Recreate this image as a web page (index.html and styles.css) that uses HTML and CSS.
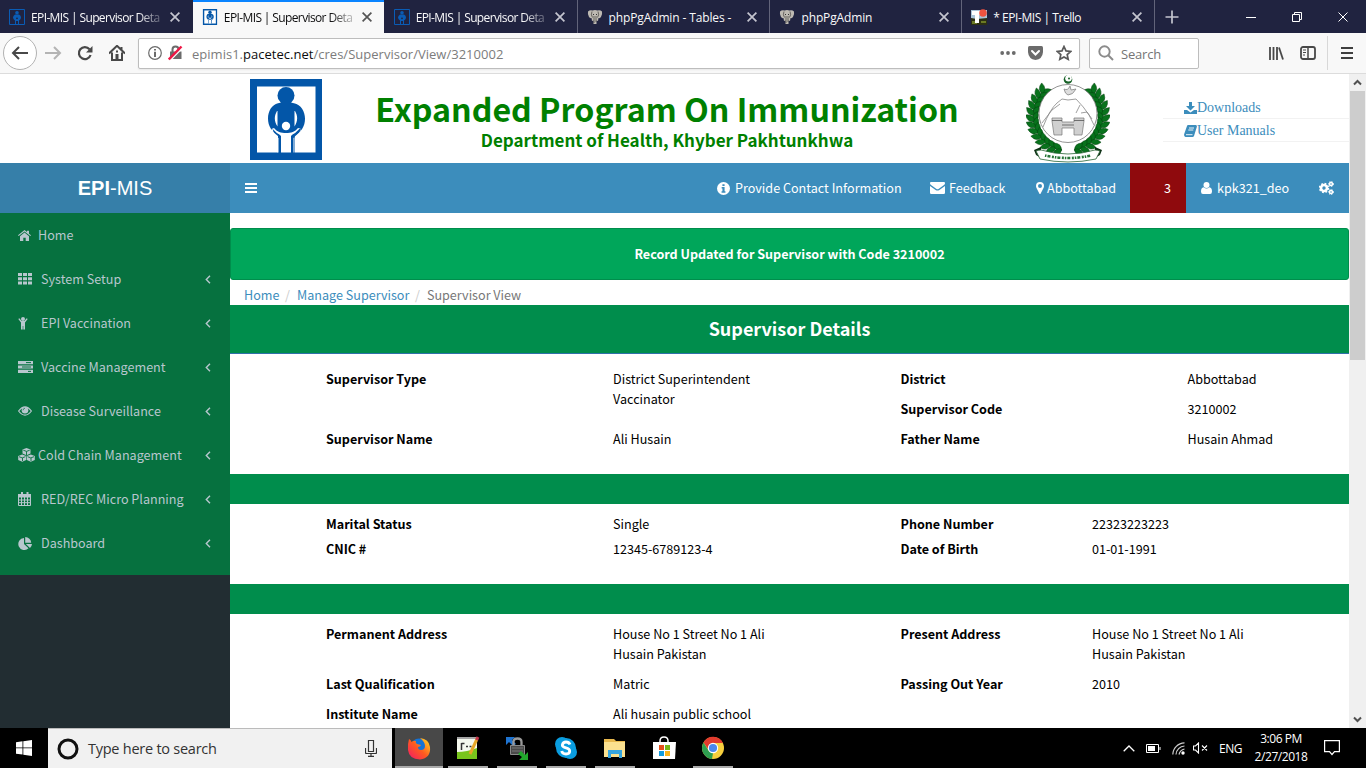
FILE: index.html
```html
<!DOCTYPE html>
<html lang="en">
<head>
<meta charset="utf-8">
<title>EPI-MIS | Supervisor Details</title>
<link rel="stylesheet" href="styles.css">
</head>
<body>
<svg class="defs" width="0" height="0">
  <defs>
    <symbol id="epi" viewBox="0 0 72 81">
      <rect width="72" height="81" fill="#0356a8"/><rect x="7" y="7.500" width="58.500" height="66" fill="#fff"/>
      <circle cx="36" cy="16.500" r="8.500" fill="#0356a8"/>
      <path fill="#0356a8" d="M31 23h10q0 1 3 1.200c7 1.500 11 8 11 15.500 0 8-4 13-10 17.500V74H28V57c-6-4.500-10-9.500-10-17.500 0-7.500 4-14 10-15.300q3-.2 3-1.200z"/>
      <path fill="#fff" d="M27 32c-3 5-3 10 .5 15.500V32zM45 32c3 5 3 10-.5 15.500V32zM22 49c5 6 6 5 9 8v16.500h10V57c3-3 4-2 9-8l1 2c-2 5-6 7-7.500 8v14.500h1V58c3-2 5-4 6.500-8l-3-1c-3 4-7 5-12 5s-9-1-12-5l-2.500 1c1 4 3 6 6 8v15.500h1V59c-2-1-5-3-5.500-8z"/>
      <circle cx="36" cy="47" r="4.200" fill="#fff"/>
    </symbol>
    <symbol id="epi-dark" viewBox="0 0 16 16">
      <path fill="none" stroke="#0a5cb5" stroke-width="1" d="M.5.500h15v15H.5z"/>
      <circle cx="8" cy="3.800" r="1.800" fill="#0a5cb5"/><path fill="#0a5cb5" d="M6 5.500h4q2 1 2 3T10 11.500V15H9v-3H7v3H6v-3.500Q4 10 4 8.500t2-3z"/><circle cx="8" cy="9.300" r=".9" fill="#202340"/>
    </symbol>
    <symbol id="x" viewBox="0 0 10 10"><path d="M.6.600l8.800 8.800M9.400.600L.6 9.400" fill="none" stroke="currentColor" stroke-width="1.700"/></symbol>
    <symbol id="elephant" viewBox="0 0 16 16">
      <path fill="#bdb9b2" d="M1 2.500Q3 .5 5.500 1.500 8 .5 10.500 1.500 13 .5 15 2.500q.6 3-1 5.500-1 1.500-2.500 1L11 12l-1.500-.5L9.500 15h-3V11.500L5 12 4.500 9Q3 9.500 2 8 .4 5.500 1 2.500z"/>
      <path fill="none" stroke="#4e4b48" stroke-width=".8" d="M5 2.500Q3.500 6 5.500 8.500M11 2.500q1.500 3.500-.5 6M7 7v7M9 7v6"/><path fill="#333" d="M6 5h1v1H6zM9 5h1v1H9z"/>
    </symbol>
    <symbol id="chev" viewBox="0 0 6 9"><path d="M5 .8L1.300 4.500 5 8.200" fill="none" stroke="currentColor" stroke-width="1.400"/></symbol>
  </defs>
</svg>

<div class="tabs">
  <div class="tab t1"><svg class="fav"><use href="#epi-dark"/></svg><span class="tt fade">EPI-MIS | Supervisor Deta</span><svg class="tx"><use href="#x"/></svg></div>
  <div class="tab t2 active"><svg class="fav"><use href="#epi"/></svg><span class="tt fade">EPI-MIS | Supervisor Deta</span><svg class="tx"><use href="#x"/></svg></div>
  <div class="tab t3"><svg class="fav"><use href="#epi-dark"/></svg><span class="tt fade">EPI-MIS | Supervisor Deta</span><svg class="tx"><use href="#x"/></svg></div>
  <div class="tab t4"><svg class="fav"><use href="#elephant"/></svg><span class="tt">phpPgAdmin - Tables -</span><svg class="tx"><use href="#x"/></svg></div>
  <div class="tab t5"><svg class="fav"><use href="#elephant"/></svg><span class="tt">phpPgAdmin</span><svg class="tx"><use href="#x"/></svg></div>
  <div class="tab t6"><svg class="fav" viewBox="0 0 16 16"><path fill="#a9c4d8" d="M0 1h16v14H0z"/><path fill="#2c2f14" d="M0 9l6 1 10-1v7H0z"/><path fill="#6b7a25" d="M1 12h5v3H1zM10 12h5v2h-5z"/><path fill="#fff" d="M1 2h9v4H8v8H4V6H1z"/><circle cx="12" cy="4" r="3.800" fill="#ee5340"/></svg><span class="tt">* EPI-MIS | Trello</span><svg class="tx"><use href="#x"/></svg></div>
  <div class="plus"><svg width="14" height="14" viewBox="0 0 14 14"><path d="M7 .5v13M.5 7h13" stroke="#c4c5cf" stroke-width="1.700"/></svg></div>
  <div class="win"><svg width="10" height="10"><path d="M0 5.500h10" stroke="#fff"/></svg></div>
  <div class="win"><svg width="10" height="10"><path d="M.5 2.500h7v7h-7zM2.500 2.500v-2h7v7h-2" fill="none" stroke="#fff"/></svg></div>
  <div class="win"><svg width="10" height="10"><path d="M.5.500l9 9M9.500.500l-9 9" stroke="#fff"/></svg></div>
</div>

<div class="toolbar">
  <div class="back"><svg width="18" height="14" viewBox="0 0 18 14"><path d="M8 1L2 7l6 6M2 7h15" fill="none" stroke="#484848" stroke-width="2"/></svg></div>
  <div class="tool fwd"><svg width="17" height="14" viewBox="0 0 17 14"><path d="M9 1l6 6-6 6M15 7H0" fill="none" stroke="#b4b4b4" stroke-width="2"/></svg></div>
  <div class="tool"><svg width="16" height="16" viewBox="0 0 16 16"><path d="M12.500 4.200A6 6 0 1 0 13.600 10" fill="none" stroke="#484848" stroke-width="2.200"/><path fill="#484848" d="M15.500 1v6.500H9z"/></svg></div>
  <div class="tool"><svg width="16" height="16" viewBox="0 0 16 16"><path d="M0 8.500L8 .8l8 7.700M3 7.500V15h10V7.500M12.500 2v3" fill="none" stroke="#484848" stroke-width="2"/><path fill="#484848" d="M6.500 9h3v6h-3zM7 5.500h2v2H7z"/></svg></div>
  <div class="urlbar">
    <svg width="14" height="14" viewBox="0 0 14 14"><circle cx="7" cy="7" r="6.300" fill="none" stroke="#6b6b6b" stroke-width="1.200"/><path fill="#6b6b6b" d="M6 3h2v1.600H6zM6 5.800h2V11H6z"/></svg>
    <svg class="lock" width="15" height="16" viewBox="0 0 15 16"><path fill="#6b6b6b" d="M2 6.500h11.500V14H2z"/><path d="M4.500 8V4.500a3 3 0 0 1 6 0V8" fill="none" stroke="#6b6b6b" stroke-width="2"/><path d="M2 15.500L14.500 3" stroke="#fff" stroke-width="1.500"/><path d="M.8 14.500L13.500 1.500" stroke="#ef1745" stroke-width="2.400"/></svg>
    <span class="url">epimis1.<b>pacetec.net</b>/cres/Supervisor/View/3210002</span>
    <svg width="16" height="4"><circle cx="2.200" cy="2" r="1.900" fill="#6b6b6b"/><circle cx="8" cy="2" r="1.900" fill="#6b6b6b"/><circle cx="13.800" cy="2" r="1.900" fill="#6b6b6b"/></svg>
    <svg class="pocket" width="15" height="14" viewBox="0 0 15 14"><path fill="#6b6b6b" d="M1.500 0h12Q15 0 15 1.500V6Q14.500 13 7.500 14 .5 13 0 6V1.500Q0 0 1.500 0z"/><path d="M4 5l3.500 3.500L11 5" fill="none" stroke="#fff" stroke-width="2" stroke-linecap="round"/></svg>
    <svg class="star" width="16" height="16" viewBox="0 0 16 16"><path d="M8 1.500l2 4.400 4.800.5-3.600 3.200 1 4.700L8 11.900l-4.200 2.400 1-4.700L1.200 6.400 6 5.900z" fill="none" stroke="#5a5a5a" stroke-width="1.700"/></svg>
  </div>
  <div class="search"><svg width="16" height="16" viewBox="0 0 16 16"><circle cx="6.500" cy="6.500" r="5.200" fill="none" stroke="#8b8b8b" stroke-width="1.900"/><path d="M10 10l5 5" stroke="#8b8b8b" stroke-width="2"/></svg><span>Search</span></div>
  <div class="tool lib"><svg width="16" height="14" viewBox="0 0 16 14"><path d="M2 1v13M5.500 1v13M9 1v13" stroke="#484848" stroke-width="1.800"/><path d="M11 1.500l4 12" stroke="#484848" stroke-width="1.800"/></svg></div>
  <div class="tool"><svg width="16" height="14" viewBox="0 0 16 14"><rect x="1" y="1" width="14" height="12" rx="2" fill="none" stroke="#484848" stroke-width="1.800"/><path d="M8 1v12" stroke="#484848" stroke-width="1.500"/><path d="M3 4h3M3 6.500h3M3 9h2" stroke="#484848"/></svg></div>
  <div class="menu"><svg width="12" height="12"><path d="M0 1h12M0 6h12M0 11h12" stroke="#3f3f3f" stroke-width="2"/></svg></div>
</div>

<div class="view">
  <div class="page">
    <header class="banner">
      <svg class="logo"><use href="#epi"/></svg>
      <div class="titles"><h1>Expanded Program On Immunization</h1><h2>Department of Health, Khyber Pakhtunkhwa</h2></div>
      <svg class="emblem" width="84" height="88" viewBox="0 0 84 88">
        <defs>
          <path id="leaf" d="M0 1Q-5.500-4 0-10 5.500-4 0 1z"/>
          <g id="pair"><use href="#leaf" transform="rotate(-38)"/><use href="#leaf" transform="rotate(38)"/></g>
          <g id="branch" fill="#08721c" stroke="#04430e" stroke-width=".5">
            <use href="#pair" transform="rotate(48) translate(0 -34.500) rotate(-82)"/>
            <use href="#pair" transform="rotate(58) translate(0 -34.500) rotate(-82)"/>
            <use href="#pair" transform="rotate(68) translate(0 -34.500) rotate(-82)"/>
            <use href="#pair" transform="rotate(78) translate(0 -34.500) rotate(-82)"/>
            <use href="#pair" transform="rotate(88) translate(0 -34.500) rotate(-82)"/>
            <use href="#pair" transform="rotate(98) translate(0 -34.500) rotate(-82)"/>
            <use href="#pair" transform="rotate(108) translate(0 -34.500) rotate(-82)"/>
            <use href="#pair" transform="rotate(118) translate(0 -34.500) rotate(-82)"/>
            <use href="#pair" transform="rotate(128) translate(0 -34.500) rotate(-82)"/>
            <use href="#pair" transform="rotate(138) translate(0 -34.500) rotate(-82)"/>
            <use href="#pair" transform="rotate(148) translate(0 -34.500) rotate(-82)"/>
            <use href="#pair" transform="rotate(158) translate(0 -34.500) rotate(-82)"/>
            <use href="#pair" transform="rotate(168) translate(0 -34.500) rotate(-82)"/>
          </g>
        </defs>
        <g transform="translate(42 41)"><use href="#branch"/><use href="#branch" transform="scale(-1 1)"/></g>
        <circle cx="42" cy="38.500" r="29" fill="#fff" stroke="#777" stroke-width=".8"/>
        <circle cx="42" cy="4.500" r="4.300" fill="#176127"/><circle cx="42.500" cy="3.200" r="3.300" fill="#fff"/><circle cx="43" cy="3.500" r="1" fill="#176127"/>
        <g fill="none" stroke="#858585" stroke-width=".8"><path d="M17 52Q24 34 31 28l5-4 6 1 8-1q8 8 13 16l5 10M16 48l10-13 8-6M54 30l-4 8M55 38l6-1 5 7"/><path fill="#ddd" d="M38 14q4 2 6-3l1 4 5-1q-3 6-8 6-3-1-4-6z"/></g>
        <path fill="#d0d0d0" stroke="#777" stroke-width=".7" d="M26 43h10v4h12v-4h10v3l-2 14h-8v-7H36v7h-8l-2-14z"/><path d="M26 45.500h10M48 45.500h10M36 50h12" stroke="#555" stroke-width=".8"/>
        <path fill="#0d2e14" d="M8 75l7-3v11l-5-3zM76 75l-7-3v11l5-3z"/>
        <path fill="#fff" stroke="#286535" stroke-width=".8" d="M10 76q3-1 5-1 27 8 54 0 2 0 5 1l-4 8q-28 6-56 0z"/>
        <path d="M19 80.500q23 5 46 0" fill="none" stroke="#277637" stroke-width="2.600" stroke-dasharray="1.500 1 3 1.500 2 1"/>
      </svg>
      <div class="links">
        <a><svg width="13" height="12" viewBox="0 0 13 12"><path fill="#3c8dbc" d="M5 0h3v4h3L6.500 8.500 2 4h3zM0 8h3l3.500 2.500L10 8h3v4H0z"/></svg>Downloads</a>
        <a><svg width="13" height="12" viewBox="0 0 13 12"><path fill="#3c8dbc" d="M4 0h8q1.200.5.800 2L10 11q-.5 1-1.500 1H1.500Q-.4 11 .2 9L3 1Q3.300 0 4 0zM2 9.500q0 1 1 1h5.500l2.600-8.700h.5L9 11H2.500Q1.500 11 1.500 9.500z"/><path d="M5 3h5M4.300 5h5M2 9.700h6.500" stroke="#fff" stroke-width=".9"/></svg>User Manuals</a>
      </div>
    </header>
    <div class="nav">
      <div class="brand"><b>EPI</b>-MIS</div>
      <div class="burger"><svg width="12" height="10"><path d="M0 1h12M0 5h12M0 9h12" stroke="#fff" stroke-width="2"/></svg></div>
      <div class="ni n1"><svg width="13" height="13" viewBox="0 0 12 12"><circle cx="6" cy="6" r="6" fill="#fff"/><path fill="#3c8dbc" d="M5 2h2v1.700H5zM4.300 4.600H7v4h.8V10H4.200V8.600H5V6h-.7z"/></svg><span>Provide Contact Information</span></div>
      <div class="ni n2"><svg width="15" height="12" viewBox="0 0 15 12"><path fill="#fff" d="M1 0h13q1 0 1 1.300Q15 2.300 14 3L8.500 7q-1 .6-2 0L1 3Q0 2.300 0 1.300 0 0 1 0zM0 4l6 4.200q1.500.8 3 0L15 4v6.700q0 1.300-1.300 1.300H1.300Q0 12 0 10.700z"/></svg><span>Feedback</span></div>
      <div class="ni n3"><svg width="8" height="12" viewBox="0 0 8 12"><path fill="#fff" fill-rule="evenodd" d="M4 0a4 4 0 0 1 4 4q0 1-.5 2L4.700 11.500q-.7 1-1.400 0L.5 6Q0 5 0 4a4 4 0 0 1 4-4zm0 2a2 2 0 1 0 0 4 2 2 0 0 0 0-4z"/></svg><span>Abbottabad</span></div>
      <div class="ni n4"><span>3</span></div>
      <div class="ni n5"><svg width="11" height="12" viewBox="0 0 11 12"><circle cx="5.500" cy="3" r="3" fill="#fff"/><path fill="#fff" d="M2.600 5.200q3 2.400 5.800 0Q11 5.500 11 9.500q0 2.500-2 2.500H2Q0 12 0 9.500 0 5.500 2.600 5.200z"/></svg><span>kpk321_deo</span></div>
      <div class="ni n6"><svg width="15" height="14" viewBox="0 0 15 14"><circle cx="5" cy="7" r="3" fill="none" stroke="#fff" stroke-width="2.600"/><circle cx="5" cy="7" r="4.500" fill="none" stroke="#fff" stroke-width="1.400" stroke-dasharray="1.770"/><circle cx="12" cy="3" r="1.500" fill="none" stroke="#fff" stroke-width="1.500"/><circle cx="12" cy="3" r="2.500" fill="none" stroke="#fff" stroke-dasharray="1.200"/><circle cx="12" cy="11" r="1.500" fill="none" stroke="#fff" stroke-width="1.500"/><circle cx="12" cy="11" r="2.500" fill="none" stroke="#fff" stroke-dasharray="1.200"/></svg></div>
    </div>
    <div class="body">
      <aside class="side"><div class="smenu">
        <div class="si tight"><svg width="13" height="11" viewBox="0 0 13 11"><path fill="currentColor" d="M6.500 2.500L11 6.300V11H7.700V7.700H5.300V11H2V6.300zM6.500 0L9 2V.7h2v3L13 5.300l-.7.8L6.500 1.500.7 6.100 0 5.300z"/></svg><span>Home</span></div>
        <div class="si"><svg width="14" height="12" viewBox="0 0 14 12"><path fill="currentColor" d="M0 0h4v3H0zM5 0h4v3H5zM10 0h4v3h-4zM0 4.200h4v3H0zM5 4.200h4v3H5zM10 4.200h4v3h-4zM0 8.400h4v3H0zM5 8.400h4v3H5zM10 8.400h4v3h-4z"/></svg><span>System Setup</span><svg class="ch"><use href="#chev"/></svg></div>
        <div class="si"><svg width="10" height="13" viewBox="0 0 10 13"><circle cx="5" cy="2" r="2" fill="currentColor"/><path fill="currentColor" d="M1.300 1.200L3.700 4h2.600l2.400-2.800 1 .8-2.700 3.500V12.500H5.300V9h-.6v3.500H3V5.500L.3 2z"/></svg><span>EPI Vaccination</span><svg class="ch"><use href="#chev"/></svg></div>
        <div class="si"><svg width="15" height="12" viewBox="0 0 15 12"><path fill="currentColor" d="M0 0h15v3.200H0zM0 4.400h15v3.200H0zM0 8.800h15V12H0z"/><path d="M8 1.600h5M4 6h9M10 10.400h3" stroke="#06713f"/></svg><span>Vaccine Management</span><svg class="ch"><use href="#chev"/></svg></div>
        <div class="si"><svg width="14" height="10" viewBox="0 0 14 10"><path d="M.6 5Q7-3.200 13.400 5 7 13.200.6 5z" fill="none" stroke="currentColor" stroke-width="1.200"/><circle cx="7" cy="4.300" r="3.300" fill="currentColor"/><path d="M5 4.300Q5 2.500 7 2.200" fill="none" stroke="#06713f" stroke-width=".7"/></svg><span>Disease Surveillance</span><svg class="ch"><use href="#chev"/></svg></div>
        <div class="si tight"><svg width="17" height="14" viewBox="0 0 17 14"><g fill="currentColor"><path d="M8.500 0l4 1.500v4l-4 1.700-4-1.700v-4zM4.200 6.500l4 1.500v4l-4 1.700-4-1.700V8zM12.800 6.500l4 1.500v4l-4 1.700-4-1.700V8z"/></g><path d="M5.300 2.200l3.200 1.200 3.200-1.200M8.500 3.400V7M1 8.700l3.200 1.200 3.200-1.200M9.600 8.700l3.200 1.200L16 8.700M4.500 10v3M13 10v3" fill="none" stroke="#06713f" stroke-width=".9"/></svg><span>Cold Chain Management</span><svg class="ch"><use href="#chev"/></svg></div>
        <div class="si"><svg width="13" height="14" viewBox="0 0 13 14"><path d="M.5 2.500h12v11H.5zM.5 5h12M.5 8h12M.5 10.700h12M3.500 5v8M6.500 5v8M9.500 5v8" fill="none" stroke="currentColor"/><path fill="currentColor" d="M0 2h13v3H0zM3 0h2v4H3zM8.500 0h2v4h-2z"/></svg><span>RED/REC Micro Planning</span><svg class="ch"><use href="#chev"/></svg></div>
        <div class="si"><svg width="14" height="13" viewBox="0 0 14 13"><path fill="currentColor" d="M6 1v6l4.500 4.300A6 6 0 1 1 6 1zM7.200 0a6 6 0 0 1 6 5.800h-6zM7.800 7H14a6 6 0 0 1-2 4z"/></svg><span>Dashboard</span><svg class="ch"><use href="#chev"/></svg></div>
      </div></aside>
      <main class="main">
        <div class="alert">Record Updated for Supervisor with Code 3210002</div>
        <div class="crumbs"><a>Home</a><i>/</i><a>Manage Supervisor</a><i>/</i><span>Supervisor View</span></div>
        <div class="head">Supervisor Details</div>
        <section class="grid g1">
          <b>Supervisor Type</b><span class="tall">District Superintendent Vaccinator</span><b>District</b><span>Abbottabad</span>
          <b class="c3">Supervisor Code</b><span>3210002</span>
          <b>Supervisor Name</b><span>Ali Husain</span><b>Father Name</b><span>Husain Ahmad</span>
        </section>
        <div class="bar"></div>
        <section class="grid g2">
          <b>Marital Status</b><span>Single</span><b>Phone Number</b><span>22323223223</span>
          <b>CNIC #</b><span>12345-6789123-4</span><b>Date of Birth</b><span>01-01-1991</span>
        </section>
        <div class="bar"></div>
        <section class="grid g3">
          <b>Permanent Address</b><span>House No 1 Street No 1 Ali Husain Pakistan</span><b>Present Address</b><span>House No 1 Street No 1 Ali Husain Pakistan</span>
          <b>Last Qualification</b><span>Matric</span><b>Passing Out Year</b><span>2010</span>
          <b>Institute Name</b><span>Ali husain public school</span>
        </section>
      </main>
    </div>
  </div>
  <div class="scroll">
    <svg width="17" height="17"><path d="M5 10.500l3.500-3.500 3.500 3.500" fill="none" stroke="#505050" stroke-width="2"/></svg>
    <div class="thumb"></div>
    <svg class="down" width="17" height="17"><path d="M5 6.500L8.500 10 12 6.500" fill="none" stroke="#505050" stroke-width="2"/></svg>
  </div>
</div>

<div class="taskbar">
  <div class="start"><svg width="16" height="16" viewBox="0 0 16 16"><path fill="#fff" d="M0 2.200l6.500-.9v6.200H0zM7.300 1.200L16 0v7.500H7.300zM0 8.300h6.500v6.300L0 13.700zM7.300 8.300H16V16l-8.700-1.300z"/></svg></div>
  <div class="tsearch"><svg width="22" height="22"><circle cx="11" cy="11" r="9" fill="none" stroke="#111" stroke-width="3"/></svg><span>Type here to search</span><svg width="12" height="17" viewBox="0 0 12 17"><path d="M3.500.500h5v11h-5zM.5 8v4.500q0 1 1 1h9q1 0 1-1V8M6 13.500v3M3 16.300h6" fill="none" stroke="#333" stroke-width="1.200"/></svg></div>
  <div class="app ff"><svg width="24" height="24" viewBox="0 0 24 24"><defs><linearGradient id="fg" x1="0" y1="1" x2="1" y2="0"><stop offset="0" stop-color="#f5156c"/><stop offset=".5" stop-color="#ff5a1f"/><stop offset="1" stop-color="#ffe226"/></linearGradient></defs><circle cx="12" cy="10.500" r="8" fill="#1573d6"/><path fill="url(#fg)" d="M2 3q2 1 2.500 3Q7 4 9 5q-1 2 1 3l4 1q-1 2-3 2 0 3 3 3 4 0 4-4 0-4-5-8Q22 3 23 11q1 11-10 12.500Q2 23 1 14 .5 8 2 3z"/></svg></div>
  <div class="app run"><svg width="24" height="24" viewBox="0 0 24 24"><path fill="#f4f8ee" d="M1 2h20v21H1z"/><path fill="#78c51c" d="M1 16q10 0 20-4v11H1z"/><path fill="#a5a5a5" d="M1 1h20v2H1z"/><path d="M5.500 7v7M5.500 7.500h3M10 10.500h2M13.500 10.500h2" stroke="#333" stroke-width="1.500"/><path d="M21 3l-7 15" stroke="#e7a827" stroke-width="3"/><path d="M22 1l-1.500 3" stroke="#c5354b" stroke-width="3"/></svg></div>
  <div class="app run"><svg width="24" height="24" viewBox="0 0 24 24"><path fill="#1f74d1" d="M1 1h9L7 4l4 4-3 2-4-4-3 3z"/><path d="M8.500 11V6q0-3.500 4-3.500T16.500 6v5" fill="none" stroke="#9a9a9a" stroke-width="2.300"/><path fill="#4a4a4a" stroke="#8a8a8a" d="M5.500 9.500h14v9h-14z"/><path d="M7 12h11M7 15h11" stroke="#777"/><path fill="#21a82c" d="M23 24h-9l3-3-4-3 3-3 4 4 3-3z"/></svg></div>
  <div class="app run"><svg width="24" height="24" viewBox="0 0 24 24"><circle cx="8" cy="8" r="7" fill="#0a9de0"/><circle cx="16" cy="16" r="7" fill="#0a9de0"/><circle cx="12" cy="12" r="10" fill="#0a9de0"/><path d="M16 8.500Q15 6 12 6T8.300 9q0 2 3.700 2.800T15.700 15q0 3-3.700 3t-4.300-3" fill="none" stroke="#fff" stroke-width="2.800"/></svg></div>
  <div class="app run"><svg width="24" height="24" viewBox="0 0 24 24"><path fill="#e9b94e" d="M1 3h10l2 2h9v5H1z"/><path fill="#fbe08f" d="M1 6h21v15H1z"/><path fill="#37a6df" d="M5 14h14v8h-3v-4H8v4H5z"/></svg></div>
  <div class="app"><svg width="24" height="24" viewBox="0 0 24 24"><path d="M8 8V5q0-4 4-4t4 4v3" fill="none" stroke="#fff" stroke-width="1.500"/><path fill="#fff" d="M1 6h23l-1 17H1z"/><path fill="#e5501c" d="M7 9h5v5H7z"/><path fill="#78b818" d="M13 9h5v5h-5z"/><path fill="#139bdc" d="M7 15h5v5H7z"/><path fill="#f9b31b" d="M13 15h5v5h-5z"/></svg></div>
  <div class="app run"><svg width="24" height="24" viewBox="0 0 24 24"><circle cx="12" cy="12" r="11" fill="#f7cf3e"/><path fill="#e23b2e" d="M2.500 6.500A11 11 0 0 1 22 7H12L7 13z"/><path fill="#2e9e50" d="M2.500 6.500l5 8L12 17l-1 6A11 11 0 0 1 2.500 6.500z"/><circle cx="12" cy="12" r="5.200" fill="#fff"/><circle cx="12" cy="12" r="4.100" fill="#4b88ee"/></svg></div>
  <div class="tray">
    <svg class="up" width="12" height="7"><path d="M.7 6.300L6 1l5.300 5.300" fill="none" stroke="#fff" stroke-width="1.300"/></svg>
    <svg class="bat" width="15" height="9"><path d="M.5.500h12v8H.5zM14 3v3" fill="none" stroke="#fff"/><path fill="#fff" d="M2 2h7v5H2z"/></svg>
    <svg class="wifi" width="13" height="13" viewBox="0 0 13 13"><path d="M.8 12.500A12 12 0 0 1 12.500.8M4 12.500A9 9 0 0 1 12.500 4M7 12.500Q8 8 12.500 7" fill="none" stroke="#ccc" stroke-width="1.200"/><circle cx="11" cy="11" r="1.700" fill="#fff"/></svg>
    <svg class="spk" width="15" height="12"><path d="M.5 4h2l3-3v10l-3-3h-2zM9 3.500l5 5M14 3.500l-5 5" fill="none" stroke="#fff" stroke-width="1.100"/></svg>
    <span class="eng">ENG</span>
    <div class="clock"><span>3:06 PM</span><span>2/27/2018</span></div>
    <svg class="note" width="16" height="16"><path d="M.6.600h14.800v11H10.500L8 14.500 5.500 11.600H.6z" fill="none" stroke="#fff" stroke-width="1.200"/></svg>
  </div>
</div>
</body>
</html>
```

FILE: styles.css
```css
* { box-sizing: border-box; }
body { margin: 0; width: 1366px; height: 768px; overflow: hidden; display: flex; flex-direction: column; background: #fff; font-family: "Noto Sans CJK SC", "Open Sans", sans-serif; font-size: 12.600px; color: #000; }
svg { flex: none; display: block; }
.defs { position: absolute; }

/* browser tabs */
.tabs { height: 33px; flex: none; display: flex; background: #202340; font: 12px/31px "Open Sans", sans-serif; color: #f9f9fa; }
.tab { width: 192px; height: 33px; padding: 1px 12px 0 9px; display: flex; align-items: center; border-right: 1px solid #62647a; }
.t1 { width: 193px; border-right: 0; padding-right: 13px; }
.t2 { width: 191px; }
.t3 { width: 194px; padding-left: 10px; }
.t4 { width: 193px; }
.t6 { width: 193px; }
.tab.active { background: #f8f8f8; color: #0c0c0d; border-top: 2px solid #0a84ff; border-right: 0; padding-top: 0; padding-bottom: 1px; }
.fav { width: 16px; height: 16px; margin-right: 6px; }
.tt { flex: 1; white-space: nowrap; letter-spacing: -.13px; }
.t6 .tt { letter-spacing: -.45px; }
.tt.fade { letter-spacing: -.62px; -webkit-mask-image: linear-gradient(90deg, #000 80%, #0003 99%); mask-image: linear-gradient(90deg, #000 80%, #0003 99%); }
.tx { width: 10px; height: 10px; margin-left: 6px; color: #c4c5cf; }
.active .tx { color: #555; }
.plus { width: 34px; display: flex; align-items: center; justify-content: center; margin-right: 39px; }
.win { width: 46px; display: flex; align-items: center; justify-content: center; }

/* browser toolbar */
.toolbar { height: 41px; flex: none; display: flex; align-items: center; background: #f8f8f8; border-bottom: 1px solid #dcdcdc; padding-left: 3px; }
.back { width: 34px; height: 34px; border: 1px solid #b2b2b2; border-radius: 50%; background: #fff; display: flex; align-items: center; justify-content: center; }
.tool { width: 32px; display: flex; justify-content: center; }
.urlbar { margin-left: 5px; width: 942px; height: 31px; border: 1px solid #bdbdbd; border-radius: 2px; background: #fff; display: flex; align-items: center; padding: 0 7px 0 9px; box-shadow: 0 1px 2px #0001; }
.lock { margin: 0 9px 0 6px; }
.url { flex: 1; font: 13px/28px "Open Sans", sans-serif; color: #7c7c7c; letter-spacing: .02px; padding-top: 1px; }
.url b { color: #0c0c0d; font-weight: 400; }
.pocket { margin: 0 13px 0 12px; }
.search { margin-left: 9px; width: 110px; height: 31px; border: 1px solid #bdbdbd; border-radius: 2px; background: #fff; display: flex; align-items: center; padding-left: 8px; gap: 7px; font: 13px "Open Sans", sans-serif; letter-spacing: -.2px; color: #757575; }
.search span { padding-top: 1px; }
.lib { margin-left: 61px; }
.menu { width: 39px; height: 34px; margin-left: 3px; border-left: 1px solid #d8d8d8; display: flex; align-items: center; justify-content: center; }

/* page */
.view { height: 654px; flex: none; display: flex; overflow: hidden; }
.page { width: 1349px; }
.banner { height: 89px; display: flex; padding-left: 250px; }
.logo { width: 72px; height: 81px; margin-top: 5px; }
.titles { width: 690px; text-align: center; color: #008000; padding-top: 13px; }
h1 { margin: 0; font-size: 32.200px; line-height: 42px; font-weight: 700; }
h2 { margin: 0; font-size: 17px; line-height: 22px; font-weight: 700; }
.emblem { margin: 1px 0 0 14px; }
.links { margin: 22px 0 0 53px; width: 186px; font: 14px "Liberation Serif", serif; color: #3c8dbc; }
.links a { display: flex; align-items: center; height: 23px; padding: 1px 0 0 21px; border-bottom: 1px solid #f2f2f2; }
.nav { height: 50px; display: flex; background: #3c8dbc; color: #fff; }
.brand { width: 230px; background: #367fa9; font: 20px/50px "Liberation Sans", Arial, sans-serif; text-align: center; }
.burger { padding: 20px 0 0 15px; width: 472px; }
.ni { display: flex; align-items: center; padding-left: 15px; white-space: nowrap; line-height: 20px; }
.n1 { width: 213px; gap: 5px; }
.n2 { width: 106px; gap: 4px; }
.n3 { width: 109px; gap: 3px; }
.n4 { width: 56px; background: #8f0a0d; padding-left: 34px; }
.n5 { width: 118px; gap: 5px; }
.n6 { width: 45px; }
.body { display: flex; height: 516px; }
.side { width: 230px; background: #222d32; color: #b8c7ce; }
.smenu { background: #06713f; height: 362px; }
.si { height: 44px; display: grid; grid-template-columns: 23px 1fr 6px; align-items: center; padding: 0 19px 0 18px; line-height: 20px; }
.si > span { padding-bottom: 1px; }
.si.tight { grid-template-columns: 20px 1fr 6px; }
.ch { width: 6px; height: 9px; }
.main { width: 1119px; padding-top: 15px; overflow: hidden; }
.alert { height: 52px; border: 1px solid #008d4c; border-radius: 3px; background: #00a65a; color: #fff; font-weight: 700; text-align: center; line-height: 50px; }
.crumbs { height: 25px; padding: 5px 0 0 14px; line-height: 20px; display: flex; color: #777; }
.crumbs a { color: #3c8dbc; }
.crumbs i { color: #ccc; font-style: normal; width: 17.500px; padding-left: 5.500px; }
.head { height: 49px; background: #008d4c; border-bottom: 1px solid #3070a9; color: #fff; font-size: 18px; font-weight: 700; line-height: 46px; text-align: center; }
.bar { height: 30px; background: #008d4c; }
.grid { display: grid; padding-left: 96px; line-height: 20px; align-content: start; }
.grid span { max-width: 165px; }
.grid b, .alert { letter-spacing: -.02px; }
.g1 { grid-template-columns: 287px 287.500px 287px 1fr; grid-auto-rows: 30px; padding-top: 15px; height: 120px; }
.tall { grid-row: span 2; }
.c3 { grid-column: 3; }
.g2, .g3 { grid-template-columns: 287px 287.500px 191.500px 1fr; padding-top: 10px; }
.g2 { grid-auto-rows: 25px; height: 80px; }
.g3 { grid-template-rows: 50px 30px 30px; }
.scroll { width: 17px; background: #f0f0f0; display: flex; flex-direction: column; }
.thumb { height: 269px; background: #cdcdcd; margin: 0 1px 0 1px; }
.down { margin-top: auto; }

/* taskbar */
.taskbar { height: 40px; flex: none; display: flex; background: #000; font-family: "Open Sans", sans-serif; }
.start { width: 48px; display: flex; align-items: center; justify-content: center; }
.tsearch { width: 344px; background: #f1f1f1; border-top: 1px solid #bbb; display: flex; align-items: center; padding: 0 15px 0 9px; gap: 9px; color: #333; font-size: 14.500px; letter-spacing: -.25px; margin-right: 3px; }
.tsearch span { flex: 1; }
.app { width: 49px; display: flex; align-items: center; justify-content: center; padding: 0 4px; }
.ff { width: 48px; background: #484848; border-bottom: 2px solid #aaa; padding-top: 2px; }
.run { border-bottom: 2px solid #aaa; width: 40px; margin: 0 4px 0 5px; padding: 2px 0 0; }
.tray { margin-left: auto; width: 243px; display: flex; align-items: center; color: #fff; font-size: 12px; letter-spacing: -.45px; }
.bat { margin-left: 11px; }
.wifi { margin-left: 11px; }
.spk { margin-left: 8px; }
.eng { margin-left: 11px; width: 35px; }
.clock { width: 54px; height: 38px; display: flex; flex-direction: column; text-align: center; line-height: 18px; white-space: nowrap; padding-top: 1px; }
.note { margin-left: 16px; }
```
